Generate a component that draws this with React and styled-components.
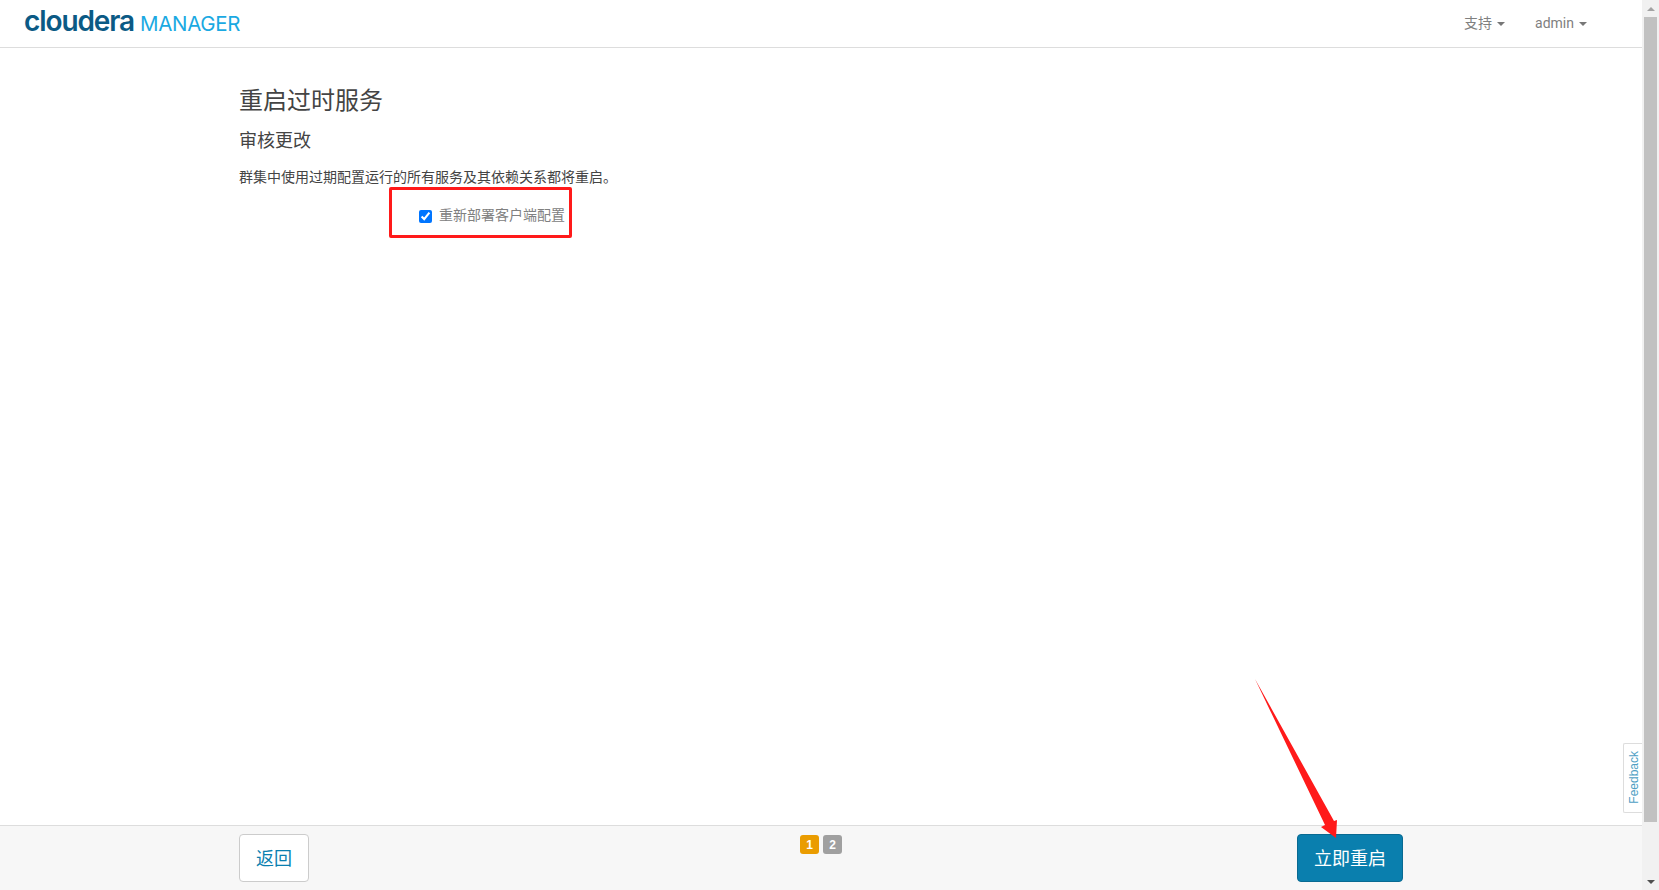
import React from "react";
import styled, { createGlobalStyle } from "styled-components";

const GlobalStyle = createGlobalStyle`
  html, body {
    margin: 0;
    height: 100%;
    overflow: hidden;
    background: #fff;
    font-family: "Open Sans", "Noto Sans CJK SC", sans-serif;
    font-size: 14px;
    color: #444;
  }
`;

const Shell = styled.div`
  position: relative;
  display: flex;
  height: 890px;
`;

const Page = styled.div`
  flex: 1;
  display: flex;
  flex-direction: column;
  min-width: 0;
`;

const Header = styled.header`
  height: 47px;
  flex: none;
  display: flex;
  align-items: center;
  justify-content: space-between;
  padding: 0 55px 0 24px;
  border-bottom: 1px solid #ddd;
`;

const Logo = styled.div`
  display: flex;
  align-items: baseline;
  margin-top: -5px;
`;

const LogoMark = styled.span`
  font-family: "Inter", sans-serif;
  font-size: 28px;
  font-weight: 600;
  letter-spacing: -1.1px;
  color: #0b5a85;
`;

const LogoProduct = styled.span`
  margin-left: 6px;
  font-family: "Inter", sans-serif;
  font-size: 20.5px;
  font-weight: 400;
  letter-spacing: -0.3px;
  color: #1aa9e2;
`;

const Nav = styled.nav`
  display: flex;
  gap: 30px;
`;

const NavItem = styled.span`
  display: flex;
  align-items: center;
  gap: 5px;
  font-family: "Roboto", "Noto Sans CJK SC", sans-serif;
  font-size: 14px;
  line-height: 20px;
  margin-top: -1px;
  color: #808080;

  &::after {
    content: "";
    margin-top: 1px;
    border-top: 4px solid #777;
    border-left: 4px solid transparent;
    border-right: 4px solid transparent;
  }
`;

const Content = styled.main`
  flex: 1;
  padding: 35px 239px 0;
`;

const Title = styled.h1`
  margin: 0;
  font-size: 24px;
  line-height: 34px;
  font-weight: 400;
  color: #444;
`;

const Subtitle = styled.h2`
  margin: 10px 0 0;
  font-size: 18px;
  line-height: 26px;
  font-weight: 400;
  color: #444;
`;

const Description = styled.p`
  margin: 14px 0 0;
  line-height: 20px;
  color: #444;
`;

const OptionRow = styled.label`
  display: flex;
  align-items: center;
  gap: 7px;
  margin: 18px 0 0 180px;
  line-height: 20px;
  color: #808080;
`;

const Checkbox = styled.input`
  width: 13px;
  height: 13px;
  margin: 2px 0 0;
  accent-color: #0075ff;
`;

const Footer = styled.footer`
  height: 65px;
  flex: none;
  box-sizing: border-box;
  display: grid;
  grid-template-columns: 1fr auto 1fr;
  align-items: start;
  padding: 8px 239px 0;
  background: #f7f7f7;
  border-top: 1px solid #ddd;
`;

const Button = styled.button`
  height: 48px;
  box-sizing: border-box;
  padding: 0 0 3px;
  border-radius: 4px;
  font-family: inherit;
  font-size: 18px;
  width: ${(p) => (p.$primary ? "106px" : "70px")};
  justify-self: ${(p) => (p.$primary ? "end" : "start")};
  color: ${(p) => (p.$primary ? "#fff" : "#0a7fb0")};
  background: ${(p) => (p.$primary ? "#0a7fae" : "#fff")};
  border: 1px solid ${(p) => (p.$primary ? "#096a92" : "#ccc")};
`;

const Steps = styled.div`
  display: flex;
  gap: 4px;
  margin-top: 1px;
`;

const Step = styled.span`
  width: 19px;
  height: 19px;
  display: flex;
  align-items: center;
  justify-content: center;
  border-radius: 3px;
  font-family: "Liberation Sans", sans-serif;
  font-size: 12px;
  font-weight: 700;
  color: #fff;
  background: ${(p) => (p.$active ? "#ea9c00" : "#a0a0a0")};
`;

const ScrollRail = styled.div`
  width: 17px;
  flex: none;
  display: flex;
  flex-direction: column;
  align-items: center;
  background: #f1f1f1;
`;

const ScrollArrow = styled.div`
  height: 17px;
  flex: none;
  display: flex;
  align-items: center;
  justify-content: center;

  &::before {
    content: "";
    border-left: 4px solid transparent;
    border-right: 4px solid transparent;
    ${(p) =>
      p.$up ? "border-bottom: 4px solid #a3a3a3;" : "border-top: 4px solid #505050;"}
  }
`;

const ScrollThumb = styled.div`
  width: 13px;
  height: 805px;
  flex: none;
  margin-right: 2px;
  align-self: flex-end;
  background: #c1c1c1;
`;

const ScrollGap = styled.div`
  flex: 1;
`;

const FeedbackTab = styled.div`
  position: absolute;
  left: 1623px;
  top: 743px;
  width: 19px;
  height: 70px;
  box-sizing: border-box;
  display: flex;
  align-items: center;
  justify-content: center;
  padding: 0 0 2px 2px;
  background: #fff;
  border: 1px solid #ddd;
  border-right: 0;
  border-radius: 2px 0 0 2px;
`;

const FeedbackLabel = styled.span`
  writing-mode: vertical-rl;
  transform: rotate(180deg);
  font-family: "Liberation Sans", sans-serif;
  font-size: 12px;
  color: #4f9fc4;
`;

const Highlight = styled.div`
  position: absolute;
  left: 389px;
  top: 187px;
  width: 183px;
  height: 51px;
  box-sizing: border-box;
  border: 3px solid #ff1a1a;
  border-radius: 2px;
  pointer-events: none;
`;

const ArrowMark = styled.svg`
  position: absolute;
  left: 1250px;
  top: 675px;
  pointer-events: none;
`;

export default function App() {
  return (
    <>
      <GlobalStyle />
      <Shell>
        <Page>
          <Header>
            <Logo>
              <LogoMark>cloudera</LogoMark>
              <LogoProduct>MANAGER</LogoProduct>
            </Logo>
            <Nav>
              <NavItem>支持</NavItem>
              <NavItem>admin</NavItem>
            </Nav>
          </Header>
          <Content>
            <Title>重启过时服务</Title>
            <Subtitle>审核更改</Subtitle>
            <Description>群集中使用过期配置运行的所有服务及其依赖关系都将重启。</Description>
            <OptionRow>
              <Checkbox type="checkbox" defaultChecked />
              重新部署客户端配置
            </OptionRow>
          </Content>
          <Footer>
            <Button>返回</Button>
            <Steps>
              <Step $active>1</Step>
              <Step>2</Step>
            </Steps>
            <Button $primary>立即重启</Button>
          </Footer>
        </Page>
        <ScrollRail>
          <ScrollArrow $up />
          <ScrollThumb />
          <ScrollGap />
          <ScrollArrow />
        </ScrollRail>
        <FeedbackTab>
          <FeedbackLabel>Feedback</FeedbackLabel>
        </FeedbackTab>
        <Highlight />
        <ArrowMark width="95" height="170" viewBox="0 0 95 170">
          <path d="M5 4 L84 146 L87 145 L86 163 L71 152 L75 150 Z" fill="#ff1a1a" />
        </ArrowMark>
      </Shell>
    </>
  );
}
